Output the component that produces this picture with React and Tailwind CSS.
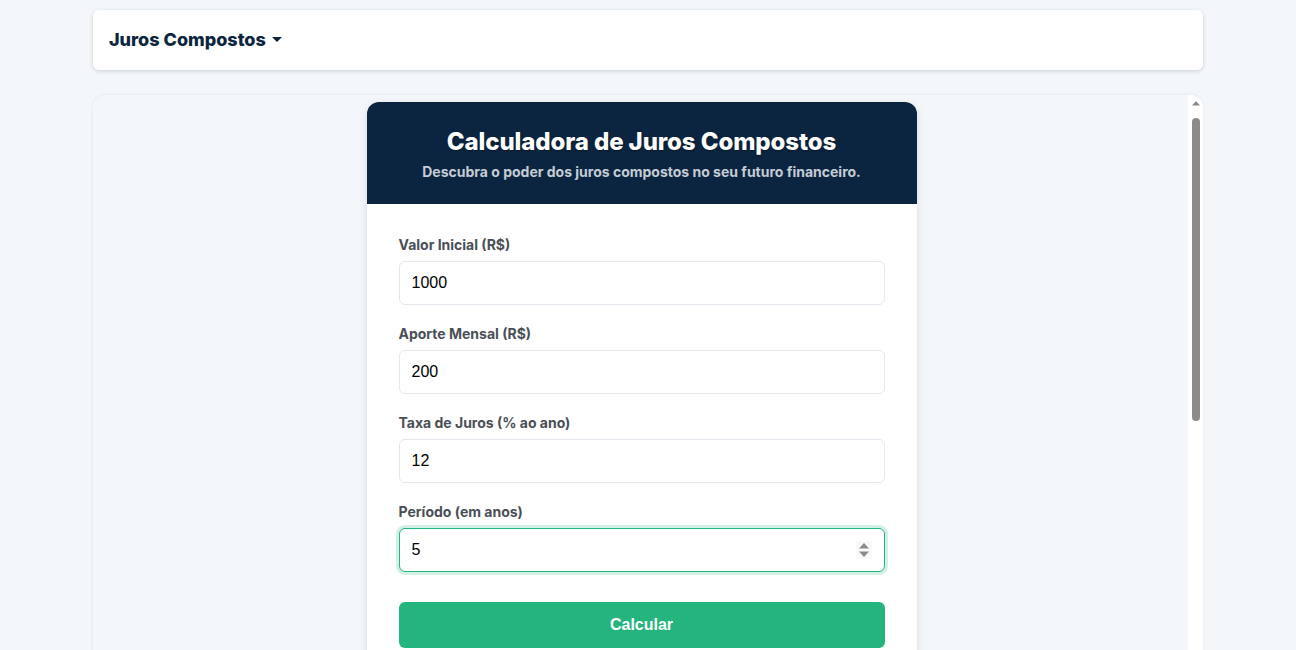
import { useState } from "react"

const fields = [
  { label: "Valor Inicial (R$)", value: "1000" },
  { label: "Aporte Mensal (R$)", value: "200" },
  { label: "Taxa de Juros (% ao ano)", value: "12" },
]

const Field = ({ label, value, focused }) => {
  const [val, setVal] = useState(value)
  return (
    <div className="mb-[18px]">
      <label className="block text-sm leading-5 font-bold text-[#4a4f57] mb-[6px] pt-px">{label}</label>
      <div className="relative">
        <input
          type="text"
          value={val}
          onChange={(e) => setVal(e.target.value)}
          className={
            focused
              ? "w-full h-[44px] px-3 rounded-md border border-[#22b57d] ring-[3px] ring-[#22b57d]/20 bg-white text-base text-black outline-none font-['Liberation_Sans',Arial,sans-serif]"
              : "w-full h-[44px] px-3 rounded-md border border-[#e3e7ee] bg-white text-base text-black outline-none font-['Liberation_Sans',Arial,sans-serif]"
          }
        />
        {focused && (
          <svg width="16" height="18" viewBox="0 0 16 18" className="absolute right-[13px] top-[13px]">
            <rect width="16" height="18" fill="#f8f8f8" />
            <path d="M3 7.5 L8 2 L13 7.5 Z" fill="#8a8a8a" />
            <path d="M3 10.5 L13 10.5 L8 16 Z" fill="#8a8a8a" />
          </svg>
        )}
      </div>
    </div>
  )
}

export default function App() {
  return (
    <div className="h-screen overflow-hidden bg-[#f4f7fa] font-['Inter',sans-serif]">
      <div className="w-[1110px] mx-auto pt-[10px]">
        {/* Top bar */}
        <div className="h-[60px] bg-white rounded-md shadow-[0_1px_4px_rgba(15,30,60,0.18)] flex items-center px-4">
          <button className="flex items-center gap-1 text-lg font-extrabold text-[#0b2540]">
            Juros Compostos
            <svg width="10" height="6" viewBox="0 0 10 6" className="ml-[2px]">
              <path d="M0 0 L10 0 L5 5 Z" fill="#0b2540" />
            </svg>
          </button>
        </div>

        {/* Main content */}
        <div className="mt-[25px] h-[600px] flex rounded-xl overflow-hidden bg-[#f4f7fa] shadow-[0_0_3px_rgba(15,30,60,0.1)]">
          <div className="flex-1 overflow-hidden">
            <div className="pt-[7px] pl-[2px] flex justify-center">
              <div className="w-[550px] rounded-xl overflow-hidden bg-white shadow-[0_2px_8px_rgba(15,30,60,0.12)]">
                <div className="bg-[#0b2540] pt-6 pb-[22px] text-center">
                  <h1 className="text-2xl leading-8 font-extrabold tracking-[-0.1px] text-white [text-shadow:0_1px_2px_rgba(0,0,0,0.4)]">
                    Calculadora de Juros Compostos
                  </h1>
                  <p className="mt-1 text-sm leading-5 font-bold text-[#c5ccd6]">
                    Descubra o poder dos juros compostos no seu futuro financeiro.
                  </p>
                </div>
                <div className="px-8 pt-[30px] pb-8">
                  {fields.map((f) => (
                    <Field key={f.label} label={f.label} value={f.value} />
                  ))}
                  <Field label="Período (em anos)" value="5" focused />
                  <button className="mt-3 w-full h-[46px] rounded-md bg-[#24b57e] text-white text-base font-bold font-['Liberation_Sans',Arial,sans-serif]">
                    Calcular
                  </button>
                  <div className="mt-8 h-[200px]" />
                </div>
              </div>
            </div>
          </div>

          {/* Scrollbar */}
          <div className="w-[15px] bg-white flex flex-col items-center pt-[5px]">
            <svg width="10" height="6" viewBox="0 0 10 6">
              <path d="M1 5.5 L5 1 L9 5.5 Z" fill="#8a8a8a" />
            </svg>
            <div className="mt-[12px] w-[8px] h-[303px] rounded-full bg-[#8b8b8b]" />
          </div>
        </div>
      </div>
    </div>
  )
}
